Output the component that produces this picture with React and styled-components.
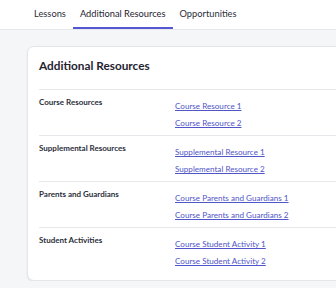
import React from "react";
import styled, { createGlobalStyle } from "styled-components";

const GlobalStyle = createGlobalStyle`
  html, body {
    margin: 0;
    padding: 0;
    background: #f5f6f8;
    font-family: Lato, "Noto Sans", sans-serif;
    overflow: hidden;
  }
`;

const TabBar = styled.nav`
  display: flex;
  height: 29px;
  padding-left: 27px;
  background: #ffffff;
  border-bottom: 1px solid #e6e8ec;
`;

const Tab = styled.a`
  display: flex;
  align-items: center;
  padding: 0 7px;
  font-size: 9.3px;
  color: ${(p) => (p.active ? "#1f2330" : "#2b2f3a")};
  border-bottom: 2px solid ${(p) => (p.active ? "#5457d1" : "transparent")};
  box-sizing: border-box;
  cursor: pointer;
`;

const Main = styled.main`
  padding: 16px 0 0 27px;
  overflow: hidden;
`;

const Card = styled.section`
  width: 420px;
  background: #ffffff;
  border: 1px solid #e4e6ea;
  border-radius: 7px;
  box-shadow: 0 1px 2px rgba(0, 0, 0, 0.08);
  padding: 0 0 9px 11px;
`;

const Title = styled.h2`
  margin: 0;
  padding: 11px 0 15px;
  font-size: 11.8px;
  line-height: 16px;
  font-weight: 700;
  color: #1f2330;
  border-bottom: 1px solid #e6e8ec;
`;

const Row = styled.div`
  display: grid;
  grid-template-columns: 136px 1fr;
  padding: 6px 0 3px;
  border-bottom: 1px solid ${(p) => (p.last ? "transparent" : "#e6e8ec")};
  ${(p) => p.last && "padding-bottom: 0;"}
`;

const Label = styled.div`
  font-size: 8px;
  line-height: 12px;
  font-weight: 700;
  color: #2b2f3a;
`;

const Links = styled.div`
  display: flex;
  flex-direction: column;
  margin-top: 2px;
`;

const Link = styled.a`
  font-size: 8.1px;
  line-height: 17px;
  color: #5055c8;
  text-decoration: underline;
  cursor: pointer;
`;

const sections = [
  { label: "Course Resources", links: ["Course Resource 1", "Course Resource 2"] },
  { label: "Supplemental Resources", links: ["Supplemental Resource 1", "Supplemental Resource 2"] },
  { label: "Parents and Guardians", links: ["Course Parents and Guardians 1", "Course Parents and Guardians 2"] },
  { label: "Student Activities", links: ["Course Student Activity 1", "Course Student Activity 2"] },
];

export default function App() {
  return (
    <>
      <GlobalStyle />
      <TabBar>
        <Tab>Lessons</Tab>
        <Tab active>Additional Resources</Tab>
        <Tab>Opportunities</Tab>
      </TabBar>
      <Main>
        <Card>
          <Title>Additional Resources</Title>
          {sections.map((s, i) => (
            <Row key={s.label} last={i === sections.length - 1}>
              <Label>{s.label}</Label>
              <Links>
                {s.links.map((l) => (
                  <Link key={l}>{l}</Link>
                ))}
              </Links>
            </Row>
          ))}
        </Card>
      </Main>
    </>
  );
}
